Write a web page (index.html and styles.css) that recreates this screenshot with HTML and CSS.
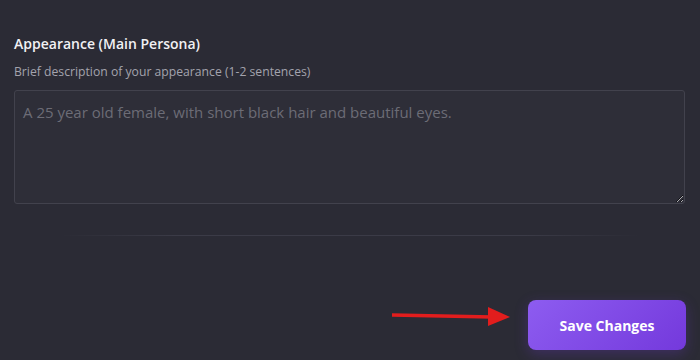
FILE: index.html
```html
<!DOCTYPE html>
<html lang="en">
<head>
    <meta charset="UTF-8">
    <meta name="viewport" content="width=device-width, initial-scale=1.0">
    <title>Persona Settings</title>
    <link rel="stylesheet" href="styles.css">
</head>
<body>
    <div class="panel">
        <div class="field">
            <h2 class="field-title">Appearance (Main Persona)</h2>
            <label class="field-label" for="appearance">Brief description of your appearance (1-2 sentences)</label>
            <textarea id="appearance" class="field-input" placeholder="A 25 year old female, with short black hair and beautiful eyes."></textarea>
        </div>

        <div class="divider"></div>

        <div class="actions">
            <svg class="arrow" width="122" height="24" viewBox="0 0 122 24">
                <line x1="2" y1="11" x2="102" y2="13" stroke="#e21d1d" stroke-width="3.5"/>
                <polygon points="98,3 120,13 98,22" fill="#e21d1d"/>
            </svg>
            <button class="save-btn">Save Changes</button>
        </div>
    </div>
</body>
</html>
```

FILE: styles.css
```css
* {
    margin: 0;
    padding: 0;
    box-sizing: border-box;
}

body {
    font-family: 'Open Sans', 'Noto Sans', sans-serif;
    background: #2b2b35;
    width: 700px;
    height: 360px;
    overflow: hidden;
}

.panel {
    padding: 34px 14px 0 14px;
}

.field {
    display: flex;
    flex-direction: column;
}

.field-title {
    font-size: 14px;
    font-weight: 600;
    color: #f1f1f4;
    line-height: 20px;
    margin-bottom: 10px;
}

.field-label {
    font-size: 12.2px;
    color: #a3a3ad;
    line-height: 16px;
    margin-bottom: 10px;
}

.field-input {
    width: 671px;
    height: 114px;
    background: #2e2e38;
    border: 1px solid #42424d;
    border-radius: 3px;
    padding: 11px 8px;
    font-family: inherit;
    font-size: 15px;
    line-height: 20px;
    color: #e0e0e6;
    outline: none;
}

.field-input::placeholder {
    color: #6c6c76;
}

.divider {
    height: 1px;
    margin: 31px 46px 0 46px;
    background: linear-gradient(90deg, rgba(70,70,82,0) 0%, #3b3b47 20%, #3b3b47 80%, rgba(70,70,82,0) 100%);
}

.actions {
    display: flex;
    justify-content: flex-end;
    align-items: center;
    margin-top: 64px;
    position: relative;
}

.arrow {
    position: absolute;
    right: 174px;
    top: 4px;
}

.save-btn {
    width: 158px;
    height: 50px;
    border: none;
    border-radius: 8px;
    background: linear-gradient(135deg, #8d5cf0 0%, #7439dc 100%);
    color: #ffffff;
    font-family: inherit;
    font-size: 14px;
    font-weight: 700;
    box-shadow: 0 4px 14px rgba(124, 58, 237, 0.25);
}
```
